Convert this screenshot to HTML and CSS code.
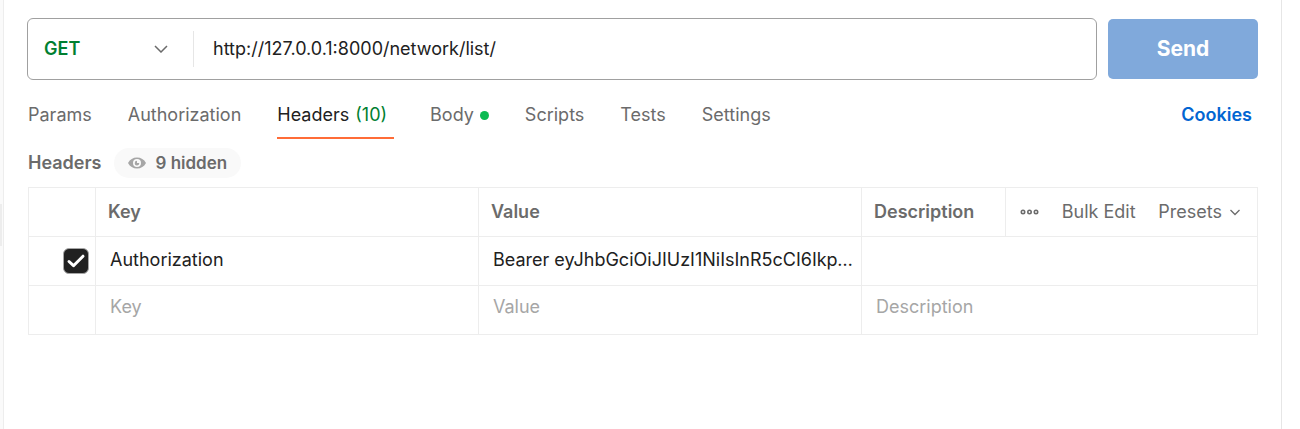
FILE: index.html
```
<!DOCTYPE html>
<html lang="en">
<head>
<meta charset="utf-8">
<meta name="viewport" content="width=device-width, initial-scale=1">
<title>Request</title>
<link rel="stylesheet" href="styles.css">
</head>
<body>
<div class="app">
  <div class="rail"><div class="rail-thumb"></div></div>
  <main class="panel">
    <form class="request">
      <div class="url-bar">
        <div class="method">
          <select class="method-select" aria-label="Method">
            <option>GET</option>
            <option>POST</option>
            <option>PUT</option>
            <option>DELETE</option>
          </select>
          <svg class="method-chevron" width="14" height="8" viewBox="0 0 14 8" aria-hidden="true"><path d="M1 1l6 6 6-6"/></svg>
        </div>
        <input class="url" type="text" aria-label="URL" value="http://127.0.0.1:8000/network/list/">
      </div>
      <button class="send" type="button">Send</button>
    </form>

    <nav class="tabs">
      <button class="tab" type="button">Params</button>
      <button class="tab" type="button">Authorization</button>
      <button class="tab tab-active" type="button">Headers <span class="count">(10)</span></button>
      <button class="tab" type="button">Body<span class="dot"></span></button>
      <button class="tab" type="button">Scripts</button>
      <button class="tab" type="button">Tests</button>
      <button class="tab" type="button">Settings</button>
      <a class="cookies" href="#">Cookies</a>
    </nav>

    <div class="section-head">
      <h2 class="section-title">Headers</h2>
      <button class="hidden-toggle" type="button">
        <svg width="18" height="12" viewBox="0 0 18 12" aria-hidden="true"><path class="eye-shape" fill-rule="evenodd" d="M0 6C2 2.400 5 .5 9 .5S16 2.400 18 6c-2 3.600-5 5.500-9 5.500S2 9.600 0 6zM9 2a4 4 0 1 0 0 8 4 4 0 0 0 0-8z"/><path class="eye-shape" d="M9 3.800v2.200h2.300A2.300 2.300 0 1 1 9 3.800z"/></svg>
        <span>9 hidden</span>
      </button>
    </div>

    <table class="grid">
      <colgroup>
        <col class="col-check">
        <col>
        <col>
        <col class="col-desc">
        <col class="col-actions">
      </colgroup>
      <thead>
        <tr>
          <th></th>
          <th>Key</th>
          <th>Value</th>
          <th>Description</th>
          <th>
            <div class="actions">
              <button class="action" type="button" aria-label="More">
                <svg width="19" height="6" viewBox="0 0 19 6" aria-hidden="true"><g class="more"><circle cx="3" cy="3" r="1.700"/><circle cx="9.500" cy="3" r="1.700"/><circle cx="16" cy="3" r="1.700"/></g></svg>
              </button>
              <button class="action" type="button">Bulk Edit</button>
              <button class="action" type="button">Presets
                <svg width="12" height="7" viewBox="0 0 12 7" aria-hidden="true"><path class="chevron" d="M1.500 1L6 5.500 10.500 1"/></svg>
              </button>
            </div>
          </th>
        </tr>
      </thead>
      <tbody>
        <tr>
          <td class="check-cell"><input class="check" type="checkbox" aria-label="Enable header" checked><svg class="check-mark" width="20" height="16" viewBox="0 0 20 16" aria-hidden="true"><path d="M3 8.500l4.500 4.200L17 3.200"/></svg></td>
          <td><input class="cell" type="text" aria-label="Key" value="Authorization"></td>
          <td><input class="cell" type="text" aria-label="Value" value="Bearer eyJhbGciOiJIUzI1NiIsInR5cCI6IkpXVCJ9"></td>
          <td colspan="2"><input class="cell" type="text" aria-label="Description"></td>
        </tr>
        <tr class="new-row">
          <td></td>
          <td><input class="cell" type="text" aria-label="New key" placeholder="Key"></td>
          <td><input class="cell" type="text" aria-label="New value" placeholder="Value"></td>
          <td colspan="2"><input class="cell" type="text" aria-label="New description" placeholder="Description"></td>
        </tr>
      </tbody>
    </table>
  </main>
  <div class="side"></div>
</div>
</body>
</html>
```
FILE: styles.css
```
* { box-sizing: border-box; }
body {
  margin: 0;
  background: #fff;
  color: #212121;
  font: 18px/24px Inter, sans-serif;
}
button, input, select {
  margin: 0;
  padding: 0;
  border: 0;
  background: none;
  color: inherit;
  font: inherit;
}
input, select { outline: 0; }
.app { display: flex; min-height: 100vh; }
.rail {
  flex: none;
  width: 4px;
  padding-top: 204px;
  background: #fafafa;
  border-right: 1px solid #ededed;
}
.rail-thumb { width: 2px; height: 42px; background: #ededed; }
.panel { flex: 1; min-width: 0; padding: 18px 23px 24px; }
.side { flex: none; width: 19px; border-left: 1px solid #e6e6e6; }

.request { display: flex; align-items: center; gap: 11px; }
.url-bar {
  flex: 1;
  display: flex;
  align-items: center;
  height: 62px;
  border: 1px solid #a0a0a0;
  border-radius: 6px;
}
.method {
  position: relative;
  flex: none;
  width: 166px;
  border-right: 1px solid #e6e6e6;
}
.method-select {
  display: block;
  appearance: none;
  width: 100%;
  height: 36px;
  padding-left: 16px;
  color: #007f31;
  font-weight: 600;
}
.method-chevron {
  position: absolute;
  right: 25px;
  top: 14px;
  fill: none;
  stroke: #6b6b6b;
  stroke-width: 1.500;
  pointer-events: none;
}
.url { flex: 1; min-width: 0; height: 36px; padding: 0 19px 2px; }
.send {
  width: 150px;
  height: 60px;
  border-radius: 5px;
  background: #80a9db;
  color: #fff;
  font-size: 21px;
  font-weight: 700;
}

.tabs { display: flex; align-items: center; gap: 36px; padding: 18px 6px 0 1px; }
.tab {
  display: flex;
  align-items: center;
  height: 41px;
  padding-bottom: 5px;
  border-bottom: 2px solid transparent;
  color: #6b6b6b;
}
.tab-active { padding-right: 7px; border-color: #ff6c37; color: #212121; }
.count { margin-left: 6px; color: #007f31; }
.dot { width: 9px; height: 9px; margin-left: 6px; border-radius: 50%; background: #0cbb52; }
.cookies {
  margin-left: auto;
  padding-bottom: 7px;
  color: #0265d2;
  font-weight: 600;
  text-decoration: none;
}

.section-head { display: flex; align-items: center; gap: 12px; padding: 9px 1px; }
.section-title { margin: 0; color: #6b6b6b; font-size: 18px; font-weight: 600; }
.hidden-toggle {
  display: flex;
  align-items: center;
  gap: 10px;
  height: 30px;
  padding: 0 14px;
  border-radius: 15px;
  background: #f9f9f9;
  color: #6b6b6b;
  font-size: 17px;
  font-weight: 600;
}
.eye-shape { fill: #a6a6a6; }

.grid { width: 100%; padding-left: 1px; table-layout: fixed; border-collapse: separate; border-spacing: 0; }
.col-check { width: 68px; }
.col-desc { width: 144px; }
.col-actions { width: 252px; }
.grid th, .grid td {
  height: 49px;
  padding: 0;
  border-right: 1px solid #ededed;
  border-bottom: 1px solid #ededed;
}
.grid th { height: 50px; padding-left: 12px; border-top: 1px solid #ededed; color: #6b6b6b; font-weight: 600; text-align: left; }
.grid tr > :first-child { border-left: 1px solid #ededed; }
.actions { display: flex; align-items: center; justify-content: space-between; padding: 0 16px 0 2px; font-weight: 400; }
.action { display: flex; align-items: center; gap: 7px; }
.more, .chevron { fill: none; stroke: #6b6b6b; stroke-width: 1.600; }
.chevron { stroke-width: 1.300; }
.cell { display: block; width: 100%; height: 46px; padding: 0 8px 4px 14px; text-overflow: ellipsis; }
.new-row .cell { padding-bottom: 8px; }
.cell::placeholder { color: #a6a6a6; opacity: 1; }
.grid .check-cell { position: relative; padding: 0 6px 0 0; }
.check {
  display: block;
  appearance: none;
  width: 26px;
  height: 26px;
  margin-left: auto;
  border: 1px solid #a6a6a6;
  border-radius: 6px;
  background: #212121;
}
.check-mark {
  position: absolute;
  right: 9px;
  top: 16px;
  fill: none;
  stroke: #fff;
  stroke-width: 3;
  stroke-linecap: round;
  stroke-linejoin: round;
  pointer-events: none;
}
.check:not(:checked) { background: #fff; }
.check:not(:checked) + .check-mark { display: none; }
```
